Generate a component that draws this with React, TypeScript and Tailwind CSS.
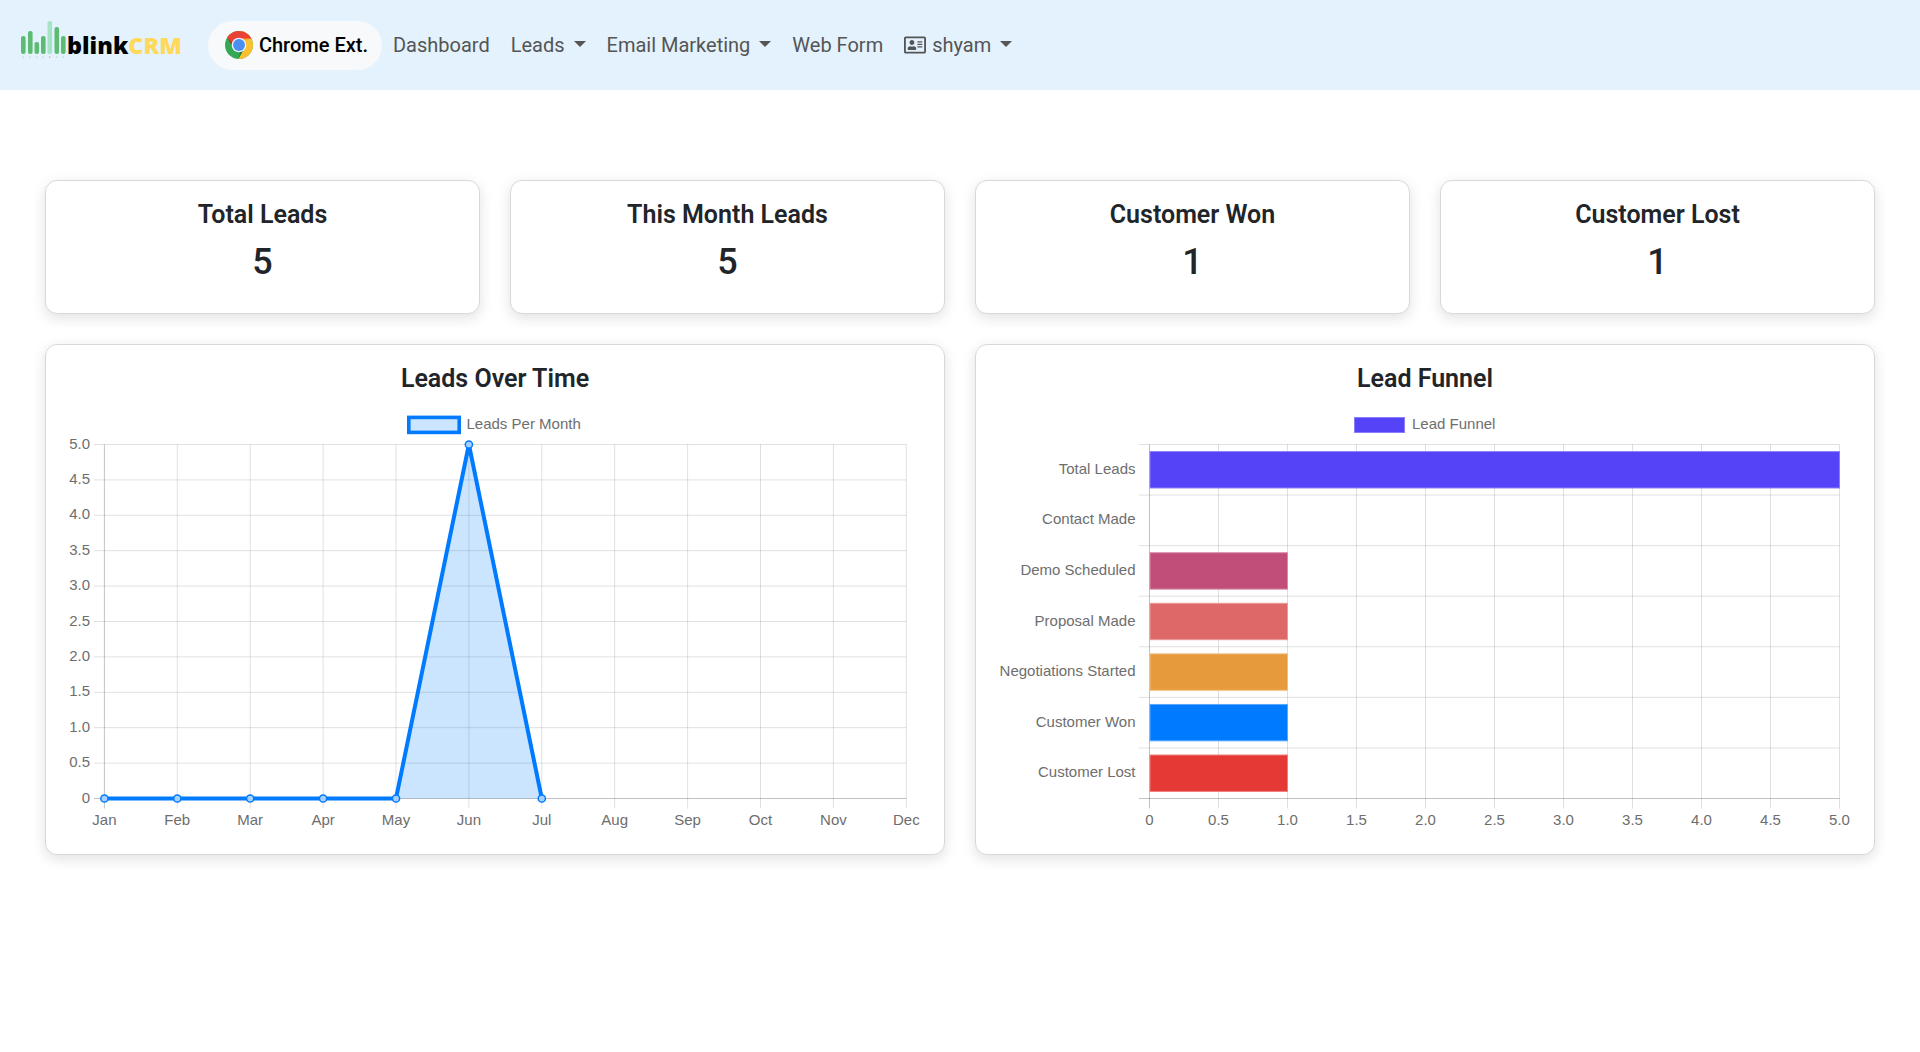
import React from "react";
import { FaRegAddressCard } from "react-icons/fa";

const months = ["Jan", "Feb", "Mar", "Apr", "May", "Jun", "Jul", "Aug", "Sep", "Oct", "Nov", "Dec"];
const yTicks = ["0", "0.5", "1.0", "1.5", "2.0", "2.5", "3.0", "3.5", "4.0", "4.5", "5.0"];
const xTicks = ["0", "0.5", "1.0", "1.5", "2.0", "2.5", "3.0", "3.5", "4.0", "4.5", "5.0"];
const funnel = [
  { label: "Total Leads", value: 5, fill: "#5543f7", stroke: "#8a7dfa" },
  { label: "Contact Made", value: 0, fill: "#5543f7", stroke: "#8a7dfa" },
  { label: "Demo Scheduled", value: 1, fill: "#c04e78", stroke: "#d98aa6" },
  { label: "Proposal Made", value: 1, fill: "#de6868", stroke: "#ea9a9a" },
  { label: "Negotiations Started", value: 1, fill: "#e69a3b", stroke: "#f0bf80" },
  { label: "Customer Won", value: 1, fill: "#007bff", stroke: "#5aa9ff" },
  { label: "Customer Lost", value: 1, fill: "#e53935", stroke: "#ef7f7c" },
];
const stats = [
  { title: "Total Leads", value: "5" },
  { title: "This Month Leads", value: "5" },
  { title: "Customer Won", value: "1" },
  { title: "Customer Lost", value: "1" },
];

const GRID = "rgba(0,0,0,0.12)";
const AXIS = "rgba(0,0,0,0.24)";
const TXT = "font-['Liberation_Sans',Arial,sans-serif] text-[15px] fill-[#6e6e6e]";

function Caret() {
  return <span className="ml-[9px] mt-[-2px] inline-block h-0 w-0 border-x-[6px] border-t-[6px] border-x-transparent border-t-[#555555]" />;
}

function ChromeIcon() {
  return (
    <svg width="28" height="28" viewBox="4 4 40 40" aria-hidden="true">
      <path fill="#34a853" d="M44,24c0,11.044-8.956,20-20,20S4,35.044,4,24S12.956,4,24,4S44,12.956,44,24z" />
      <path fill="#fbc02d" d="M24,4v20l8,4l-8.843,16c0.317,0,0.526,0,0.843,0c11.053,0,20-8.947,20-20S35.053,4,24,4z" />
      <path fill="#ea4335" d="M41.84,15H24v13l-3-1L7.16,13.26H7.14C10.68,7.69,16.91,4,24,4C31.8,4,38.55,8.48,41.84,15z" />
      <path fill="#c62828" d="M7.158,13.264l8.843,14.862L21,27L7.158,13.264z" />
      <path fill="#2e7d32" d="M23.157,44l8.934-16.059L28,25L23.157,44z" />
      <path fill="#f9a825" d="M41.865,15L24,15l-1.579,4.58L41.865,15z" />
      <circle cx="24" cy="24" r="10.5" fill="#e8f0fe" />
      <circle cx="24" cy="24" r="8.5" fill="#4a8ff0" />
    </svg>
  );
}

function Logo() {
  const bars = [
    [21, 36, "#5dbb74"],
    [28, 31, "#5dbb74"],
    [34.5, 42, "#5dbb74"],
    [41, 36, "#5dbb74"],
    [47.5, 21, "#a6e3c6"],
    [54.5, 27, "#5dbb74"],
    [61, 36, "#5dbb74"],
  ] as const;
  return (
    <div className="mb-[10px] flex h-[40px] items-end">
      <svg width="47" height="40" viewBox="20 20 47 40" aria-hidden="true">
        {bars.map(([x, y, c], i) => (
          <g key={i}>
            <rect x={x} y={y} width={4.6} height={54 - y} rx={2} fill={c} />
            <rect x={x + 1.6} y={56.5} width={1.2} height={1.2} fill={i === 4 ? "#f08a9a" : "#a6dcb8"} />
          </g>
        ))}
      </svg>
      <span className="mb-[3px] font-['Open_Sans',sans-serif] text-[23.4px] font-extrabold leading-[24px] text-black">
        blink<span className="text-[#ffd95a]">CRM</span>
      </span>
    </div>
  );
}

function Navbar() {
  return (
    <nav className="flex h-[90px] items-center bg-[#e3f2fd] pl-[20px] text-[20px] leading-[30px] text-[#555555]">
      <Logo />
      <a className="ml-[26px] flex h-[49px] w-[174px] items-center rounded-full bg-[#f7f9fb] pl-[17px] font-medium text-black">
        <ChromeIcon />
        <span className="ml-[6px]">Chrome Ext.</span>
      </a>
      <div className="ml-[11px] flex items-center gap-[21px]">
        <a>Dashboard</a>
        <a className="flex items-center">Leads<Caret /></a>
        <a className="flex items-center">Email Marketing<Caret /></a>
        <a>Web Form</a>
        <a className="flex items-center">
          <FaRegAddressCard className="mr-[6px] text-[22px]" />
          shyam<Caret />
        </a>
      </div>
    </nav>
  );
}

function StatCard({ title, value }: { title: string; value: string }) {
  return (
    <div className="flex h-[134px] flex-col items-center rounded-[12px] border border-[#d8d8d8] bg-white pt-[18px] text-[#212529] shadow-[0_4px_14px_rgba(0,0,0,0.12)]">
      <div className="text-[25px] font-semibold leading-[32px]">{title}</div>
      <div className="mt-[10px] text-[36px] font-medium leading-[42px]">{value}</div>
    </div>
  );
}

function ChartCard({ title, children }: { title: string; children: React.ReactNode }) {
  return (
    <div className="col-span-2 h-[511px] rounded-[12px] border border-[#d8d8d8] bg-white pt-[18px] shadow-[0_4px_14px_rgba(0,0,0,0.12)]">
      <div className="mb-[10px] text-center text-[25px] font-semibold leading-[32px] text-[#212529]">{title}</div>
      {children}
    </div>
  );
}

function LineChart() {
  const x0 = 104.4;
  const dx = 72.9;
  const yTop = 444.5;
  const yBot = 798.5;
  const dy = (yBot - yTop) / 10;
  const data = [0, 0, 0, 0, 0, 5, 0];
  const px = (i: number) => x0 + i * dx;
  const py = (v: number) => yBot - (v / 5) * (yBot - yTop);
  const linePts = data.map((v, i) => `${px(i)},${py(v)}`).join(" ");
  return (
    <svg className="block h-[440px] w-full" viewBox="46 405 898 440" preserveAspectRatio="xMinYMin meet">
      <rect x={408.8} y={417.4} width={50.4} height={15} fill="rgba(0,123,255,0.2)" stroke="#007bff" strokeWidth={3.6} />
      <text x={466.5} y={429} className={TXT}>Leads Per Month</text>
      {yTicks.map((t, i) => {
        const y = yBot - i * dy;
        return (
          <g key={t}>
            <line x1={94} x2={x0 + 11 * dx} y1={y} y2={y} stroke={i === 0 ? AXIS : GRID} />
            <text x={90} y={y + 4} textAnchor="end" className={TXT}>{t}</text>
          </g>
        );
      })}
      {months.map((m, i) => (
        <g key={m}>
          <line x1={px(i)} x2={px(i)} y1={yTop} y2={yBot + 10} stroke={i === 0 ? AXIS : GRID} />
          <text x={px(i)} y={825} textAnchor="middle" className={TXT}>{m}</text>
        </g>
      ))}
      <polygon points={`${px(4)},${yBot} ${px(5)},${yTop} ${px(6)},${yBot}`} fill="rgba(0,123,255,0.2)" />
      <polyline points={linePts} fill="none" stroke="#007bff" strokeWidth={4} strokeLinejoin="miter" />
      {data.map((v, i) => (
        <circle key={i} cx={px(i)} cy={py(v)} r={3.6} fill="#a8d0ff" stroke="#007bff" strokeWidth={1.5} />
      ))}
    </svg>
  );
}

function BarChart() {
  const x0 = 1149.5;
  const dx = 69;
  const yTop = 444.5;
  const yBot = 798.5;
  const row = (yBot - yTop) / 7;
  const h = 36.4;
  return (
    <svg className="block h-[440px] w-full" viewBox="976 405 898 440" preserveAspectRatio="xMinYMin meet">
      <rect x={1354.5} y={417.5} width={50} height={15} fill="#5543f7" stroke="#8a7dfa" strokeWidth={1} />
      <text x={1412} y={429} className={TXT}>Lead Funnel</text>
      {Array.from({ length: 8 }).map((_, i) => {
        const y = yTop + i * row;
        return <line key={i} x1={1139} x2={x0 + 10 * dx} y1={y} y2={y} stroke={i === 7 ? AXIS : GRID} />;
      })}
      {xTicks.map((t, i) => (
        <g key={t}>
          <line x1={x0 + i * dx} x2={x0 + i * dx} y1={yTop} y2={yBot + 10} stroke={i === 0 ? AXIS : GRID} />
          <text x={x0 + i * dx} y={825} textAnchor="middle" className={TXT}>{t}</text>
        </g>
      ))}
      {funnel.map((f, i) => {
        const cy = yTop + (i + 0.5) * row;
        return (
          <g key={f.label}>
            {f.value > 0 && (
              <rect x={x0 + 0.5} y={cy - h / 2} width={f.value * 2 * dx - 0.5} height={h} fill={f.fill} stroke={f.stroke} strokeWidth={1} />
            )}
            <text x={1135.5} y={cy + 4} textAnchor="end" className={TXT}>{f.label}</text>
          </g>
        );
      })}
    </svg>
  );
}

export default function App() {
  return (
    <div className="min-h-[1052px] bg-white font-['Roboto',sans-serif]">
      <Navbar />
      <main className="grid grid-cols-4 gap-x-[30px] gap-y-[30px] px-[45px] pt-[90px]">
        {stats.map((s) => (
          <StatCard key={s.title} {...s} />
        ))}
        <ChartCard title="Leads Over Time">
          <LineChart />
        </ChartCard>
        <ChartCard title="Lead Funnel">
          <BarChart />
        </ChartCard>
      </main>
    </div>
  );
}
